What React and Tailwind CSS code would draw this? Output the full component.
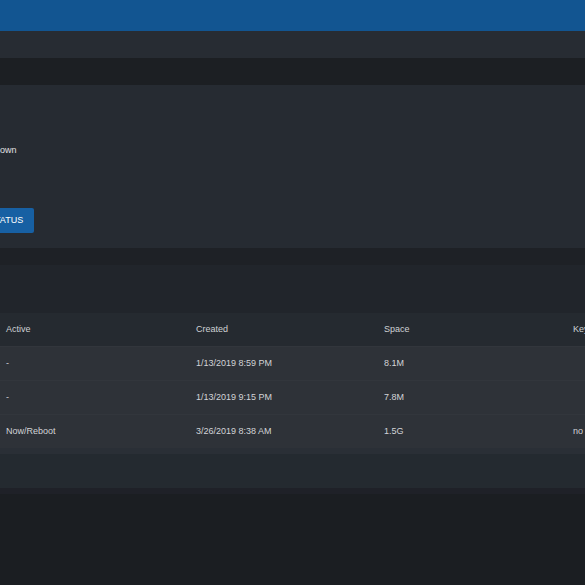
export default function App() {
  const rows = [
    { active: "-", created: "1/13/2019 8:59 PM", space: "8.1M", key: "" },
    { active: "-", created: "1/13/2019 9:15 PM", space: "7.8M", key: "" },
    { active: "Now/Reboot", created: "3/26/2019 8:38 AM", space: "1.5G", key: "no" },
  ];
  return (
    <div className="w-[585px] h-[585px] overflow-hidden bg-[#1b1e22] text-[#d4d6d9]" style={{ fontFamily: '"Liberation Sans", Arial, sans-serif' }}>
      <div className="h-[31px] bg-[#125591]" />
      <div className="h-[27px] bg-[#272c33]" />
      <div className="h-[27px] bg-[#1c1f23]" />
      <div className="h-[163px] bg-[#262b32] flex flex-col overflow-hidden">
        <div className="h-[59px]" />
        <div className="text-[9px] leading-[12px] text-[#e0e2e4] whitespace-nowrap -ml-[11px]">Shown</div>
        <div className="h-[52px]" />
        <div className="flex">
          <button className="-ml-[22px] h-[25px] px-[11px] bg-[#1760a3] text-white text-[9px] rounded-[2px] leading-[25px]">STATUS</button>
        </div>
      </div>
      <div className="h-[17px] bg-[#1e2126]" />
      <div className="h-[223px] bg-[#23282e] flex flex-col overflow-hidden">
        <div className="h-[48px] bg-[#21252b]" />
        <div className="h-[33px] bg-[#252a30] flex items-center pl-[6px] text-[9px] text-[#cfd2d5] whitespace-nowrap">
          <div className="w-[190px] shrink-0">Active</div>
          <div className="w-[188px] shrink-0">Created</div>
          <div className="w-[189px] shrink-0">Space</div>
          <div className="w-[60px] shrink-0">Key</div>
        </div>
        {rows.map((r, i) => (
          <div key={i} className="h-[34px] bg-[#2e3238] border-t border-[#32363c] flex items-center pl-[6px] text-[9px] text-[#d2d4d7] whitespace-nowrap">
            <div className="w-[190px] shrink-0">{r.active}</div>
            <div className="w-[188px] shrink-0">{r.created}</div>
            <div className="w-[189px] shrink-0">{r.space}</div>
            <div className="w-[60px] shrink-0">{r.key}</div>
          </div>
        ))}
        <div className="h-[6px] bg-[#2a2f36]" />
        <div className="flex-1 bg-[#242a30]" />
      </div>
      <div className="h-[6px] bg-[#1f2128]" />
    </div>
  );
}
